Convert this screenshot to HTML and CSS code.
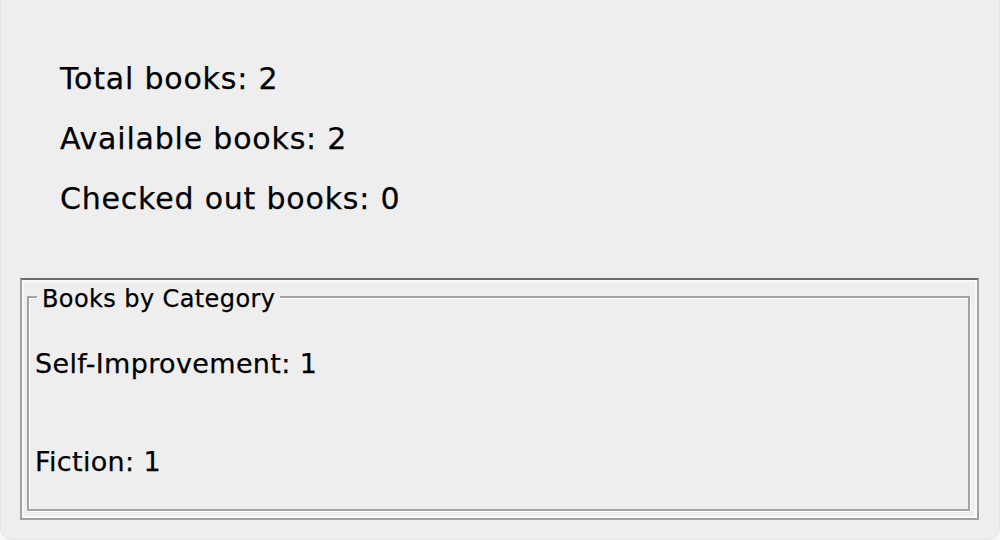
FILE: index.html
```html
<!DOCTYPE html>
<html>
<head>
<meta charset="utf-8">
<link rel="stylesheet" href="styles.css">
</head>
<body>
<div class="window">
  <div class="stats">
    <div class="stat">Total books: 2</div>
    <div class="stat">Available books: 2</div>
    <div class="stat">Checked out books: 0</div>
  </div>
  <div class="outer">
    <div class="group">
      <div class="legend">Books by Category</div>
      <div class="rows">
        <div class="row">Self-Improvement: 1</div>
        <div class="row">Fiction: 1</div>
      </div>
    </div>
  </div>
</div>
</body>
</html>
```
FILE: styles.css
```css
html, body {
  margin: 0;
  padding: 0;
  background: #f7f7f7;
}
body {
  font-family: "DejaVu Sans", "Liberation Sans", sans-serif;
  color: #000;
  -webkit-text-stroke: 0.25px #000;
}
.window {
  box-sizing: border-box;
  width: 1000px;
  height: 540px;
  background: #eeeeee;
  border: 1px solid #e6e6e6;
  border-top: none;
  border-radius: 0 0 12px 12px;
  overflow: hidden;
}
.stats {
  padding: 49px 0 0 59px;
}
.stat {
  font-size: 30px;
  line-height: 60px;
  height: 60px;
  letter-spacing: 0.8px;
}
.outer {
  margin: 49px 20px 0 19px;
  border: 2px solid #a2a2a2;
  border-top-color: #6c6c6c;
  box-shadow: inset 0 0 0 2px #f9f9f9;
  padding: 16px 7px 7px 5px;
}
.group {
  position: relative;
  height: 211px;
  border: 2px solid #a3a3a3;
  box-shadow: 1px 1px 0 #ffffff, inset 1px 1px 0 #ffffff;
}
.legend {
  position: absolute;
  left: 8px;
  top: -13px;
  padding: 0 5px;
  background: #eeeeee;
  font-size: 24px;
  line-height: 28px;
  letter-spacing: 0.4px;
}
.rows {
  display: flex;
  flex-direction: column;
  gap: 67px;
  padding: 50px 0 0 6px;
}
.row {
  font-size: 27px;
  line-height: 31px;
  letter-spacing: 0.35px;
}
```
